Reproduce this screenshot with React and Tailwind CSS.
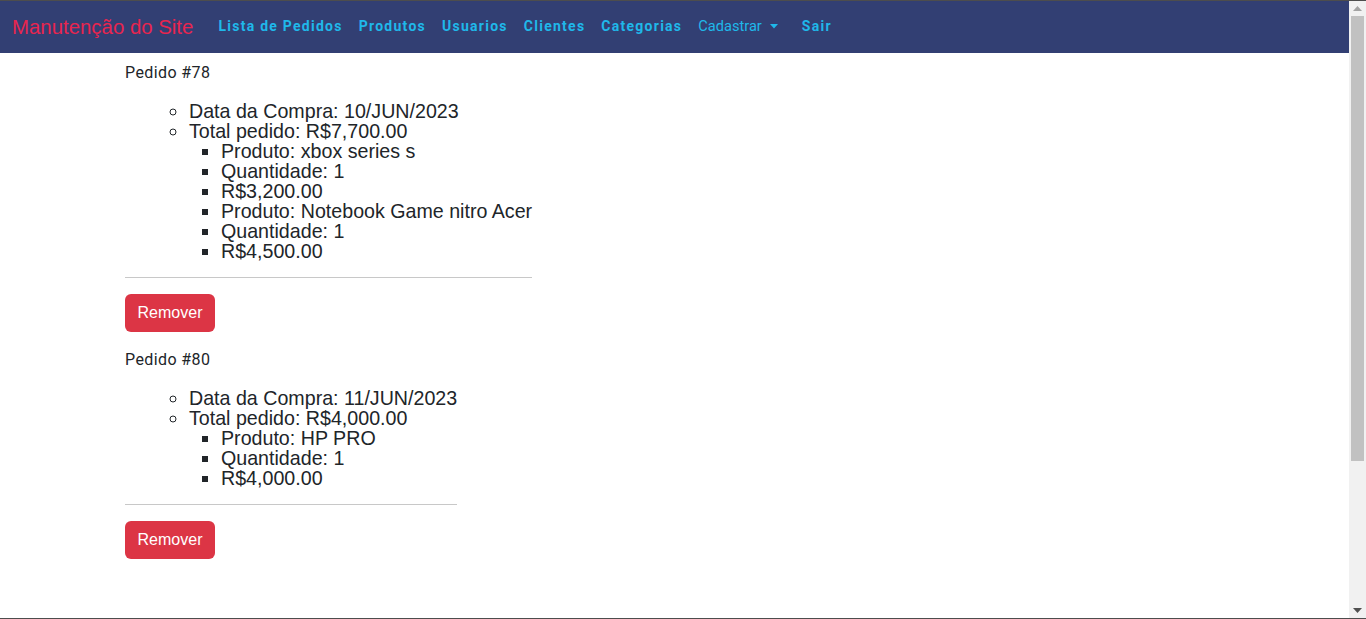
import React from "react";

const orders = [
  {
    id: 78,
    date: "10/JUN/2023",
    total: "R$7,700.00",
    items: [
      { name: "xbox series s", qty: 1, price: "R$3,200.00" },
      { name: "Notebook Game nitro Acer", qty: 1, price: "R$4,500.00" },
    ],
  },
  {
    id: 80,
    date: "11/JUN/2023",
    total: "R$4,000.00",
    items: [{ name: "HP PRO", qty: 1, price: "R$4,000.00" }],
  },
];

const links = ["Lista de Pedidos", "Produtos", "Usuarios", "Clientes", "Categorias"];

function Order({ o }) {
  return (
    <div className="mb-[16px]">
      <div className="w-fit">
        <p className="m-0 text-[16px] leading-[24px] tracking-[0.4px] text-[#212529] font-['Roboto',sans-serif]">
          Pedido #{o.id}
        </p>
        <ul className="my-4 pl-[64px] list-[circle] text-[19.65px] leading-[20px] text-[#212529] font-['Liberation_Sans',Arial,sans-serif]">
          <li>Data da Compra: {o.date}</li>
          <li>
            Total pedido: {o.total}
            <ul className="pl-[32px] list-[square]">
              {o.items.map((it, i) => (
                <React.Fragment key={i}>
                  <li>Produto: {it.name}</li>
                  <li>Quantidade: {it.qty}</li>
                  <li>{it.price}</li>
                </React.Fragment>
              ))}
            </ul>
          </li>
        </ul>
        <hr className="my-4 border-0 border-t border-[#c8c8c8]" />
      </div>
      <button className="h-[38px] w-[90px] rounded-[6px] bg-[#dc3545] text-white text-[16px] font-['Liberation_Sans',Arial,sans-serif]">
        Remover
      </button>
    </div>
  );
}

export default function App() {
  return (
    <div className="h-[619px] w-[1366px] flex flex-col overflow-hidden bg-white">
      <div className="h-px bg-[#4d4d4d]" />
      <div className="flex flex-1 min-h-0">
        <div className="flex-1 min-w-0 flex flex-col">
          <nav className="h-[52px] bg-[#323f73] flex items-center pl-[12px]">
            <span className="text-[20.4px] text-[#e8254f] font-['Liberation_Sans',Arial,sans-serif] mr-[25px]">
              Manutenção do Site
            </span>
            <div className="flex items-center gap-[16px] font-['Roboto',sans-serif] text-[14px] font-bold tracking-[0.09em] text-[#1fb8ea]">
              {links.map((l) => (
                <span key={l}>{l}</span>
              ))}
              <span className="flex items-center font-normal tracking-normal text-[14.6px]">
                Cadastrar
                <svg width="8" height="5" viewBox="0 0 8 5" className="ml-[8px]">
                  <path d="M0 0 L8 0 L4 4.5 Z" fill="#1fb8ea" />
                </svg>
              </span>
              <span className="ml-[8px]">Sair</span>
            </div>
          </nav>
          <main className="pt-2 pl-[125px]">
            {orders.map((o) => (
              <Order key={o.id} o={o} />
            ))}
          </main>
        </div>
        <div className="w-[17px] bg-[#f1f1f1] flex flex-col items-center">
          <div className="h-[15px] flex items-center justify-center">
            <svg width="9" height="5" viewBox="0 0 9 5">
              <path d="M0 5 L4.5 0 L9 5 Z" fill="#a3a3a3" />
            </svg>
          </div>
          <div className="w-[13px] h-[445px] bg-[#c1c1c1]" />
          <div className="flex-1" />
          <div className="h-[15px] flex items-center justify-center">
            <svg width="9" height="5" viewBox="0 0 9 5">
              <path d="M0 0 L9 0 L4.5 5 Z" fill="#505050" />
            </svg>
          </div>
        </div>
      </div>
      <div className="h-px bg-[#4d4d4d]" />
    </div>
  );
}
